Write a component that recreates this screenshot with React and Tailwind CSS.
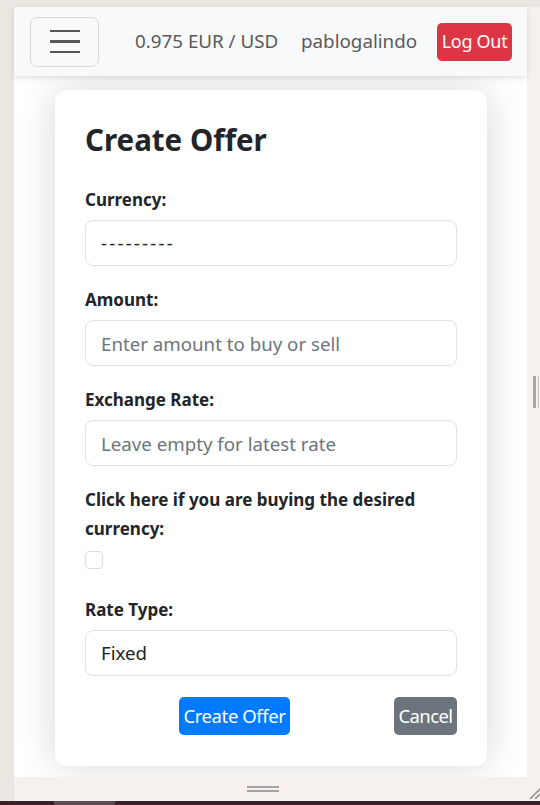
import React, { useState } from "react";

const fieldClass =
  "w-full h-[46px] px-[15px] rounded-[8px] border border-[#dee2e6] bg-white text-[18.7px] text-[#212529] placeholder:text-[#6c757d] outline-none";

const Field = ({ label, children }) => (
  <div className="mb-[19px]">
    <label className="block text-[17px] leading-[29px] font-bold text-[#212529] mb-[6px]">
      {label}
    </label>
    {children}
  </div>
);

const App = () => {
  const [currency, setCurrency] = useState("");
  const [amount, setAmount] = useState("");
  const [rate, setRate] = useState("");
  const [buying, setBuying] = useState(false);
  const [rateType, setRateType] = useState("fixed");

  return (
    <div
      className="w-[540px] h-[805px] overflow-hidden bg-[#ebe7e1] flex flex-col"
      style={{ fontFamily: '"Noto Sans", "Open Sans", sans-serif' }}
    >
      <div className="h-[7px] shrink-0" />
      <div className="flex flex-1 min-h-0">
        <div className="w-[14px] shrink-0" />
        <div className="flex flex-col flex-1 min-w-0">
          <div className="flex flex-1 min-h-0">
            {/* Page */}
            <div className="w-[513px] flex flex-col bg-white">
              {/* Navbar */}
              <nav className="relative z-10 h-[69px] shrink-0 bg-[#f8f9fa] shadow-[0_2px_6px_rgba(0,0,0,0.12)] flex items-center pl-[16px] pr-[15px]">
                <button className="w-[69px] h-[50px] rounded-[7px] border border-[#d6d8da] flex flex-col items-center justify-center gap-[8px]">
                  <span className="block w-[30px] h-[2.5px] bg-[#575757]" />
                  <span className="block w-[30px] h-[2.5px] bg-[#575757]" />
                  <span className="block w-[30px] h-[2.5px] bg-[#575757]" />
                </button>
                <span className="ml-[36px] w-[146px] whitespace-nowrap text-[18.8px] text-[#595959]">
                  0.975 EUR / USD
                </span>
                <span className="ml-[20px] w-[116px] whitespace-nowrap text-[18.8px] text-[#595959]">
                  pablogalindo
                </span>
                <button className="ml-auto w-[75px] h-[38px] rounded-[5px] bg-[#dc3545] text-white text-[18px] tracking-[-0.3px]">
                  Log Out
                </button>
              </nav>

              {/* Content */}
              <div className="flex-1 min-h-0 pt-[14px] pl-[41px]">
                <div className="w-[432px] bg-white rounded-[12px] shadow-[0_0_40px_rgba(0,0,0,0.16)] px-[30px] pt-[32px] pb-[31px]">
                  <h1 className="text-[29.5px] leading-[36px] font-bold text-[#212529] mb-[27px]">
                    Create Offer
                  </h1>

                  <Field label="Currency:">
                    <select
                      value={currency}
                      onChange={(e) => setCurrency(e.target.value)}
                      className={`${fieldClass} appearance-none tracking-[2.2px]`}
                    >
                      <option value="">---------</option>
                      <option value="EUR">EUR</option>
                      <option value="USD">USD</option>
                    </select>
                  </Field>

                  <Field label="Amount:">
                    <input
                      type="text"
                      value={amount}
                      onChange={(e) => setAmount(e.target.value)}
                      placeholder="Enter amount to buy or sell"
                      className={fieldClass}
                    />
                  </Field>

                  <Field label="Exchange Rate:">
                    <input
                      type="text"
                      value={rate}
                      onChange={(e) => setRate(e.target.value)}
                      placeholder="Leave empty for latest rate"
                      className={fieldClass}
                    />
                  </Field>

                  <div className="mb-[26px]">
                    <label className="block text-[17px] leading-[29px] font-bold text-[#212529] mb-[8px]">
                      Click here if you are buying the desired currency:
                    </label>
                    <button
                      onClick={() => setBuying(!buying)}
                      className={`block w-[18px] h-[18px] rounded-[4px] border ${
                        buying ? "bg-[#0d6efd] border-[#0d6efd]" : "bg-white border-[#dadde2]"
                      }`}
                    />
                  </div>

                  <Field label="Rate Type:">
                    <select
                      value={rateType}
                      onChange={(e) => setRateType(e.target.value)}
                      className={`${fieldClass} appearance-none`}
                    >
                      <option value="fixed">Fixed</option>
                      <option value="floating">Floating</option>
                    </select>
                  </Field>

                  <div className="flex items-center justify-between pl-[94px] pt-[2px]">
                    <button className="w-[111px] h-[38px] rounded-[5px] bg-[#007bff] text-white text-[18.5px] tracking-[-0.4px]">
                      Create Offer
                    </button>
                    <button className="w-[63px] h-[38px] rounded-[5px] bg-[#6c757d] text-white text-[18.5px] tracking-[-0.6px]">
                      Cancel
                    </button>
                  </div>
                </div>
              </div>
            </div>
            {/* Right strip */}
            <div className="flex-1 bg-[#f6f0ef] flex items-center pl-[6px] gap-[2px]">
              <span className="block w-[3px] h-[32px] bg-[#a8a8a8]" />
              <span className="block w-[1px] h-[32px] bg-[#c8c4c4]" />
            </div>
          </div>
          {/* Bottom bar */}
          <div className="h-[24px] shrink-0 bg-[#f6f0ef] flex items-center justify-center relative">
            <div className="flex flex-col gap-[2px] -ml-[28px]">
              <span className="block w-[32px] h-[2px] bg-[#a4a4a4]" />
              <span className="block w-[32px] h-[2px] bg-[#a4a4a4]" />
            </div>
            <svg
              className="absolute right-0 bottom-[2px]"
              width="12"
              height="12"
              viewBox="0 0 12 12"
            >
              <path d="M2 12 L12 2 M7 12 L12 7" stroke="#8a8a8a" strokeWidth="1.5" />
            </svg>
          </div>
        </div>
      </div>
      <div className="h-[4px] shrink-0 bg-[#3d2027] flex">
        <div className="w-[54px]" />
        <div className="w-[61px] bg-[#5e4a50]" />
      </div>
    </div>
  );
};

export default App;
